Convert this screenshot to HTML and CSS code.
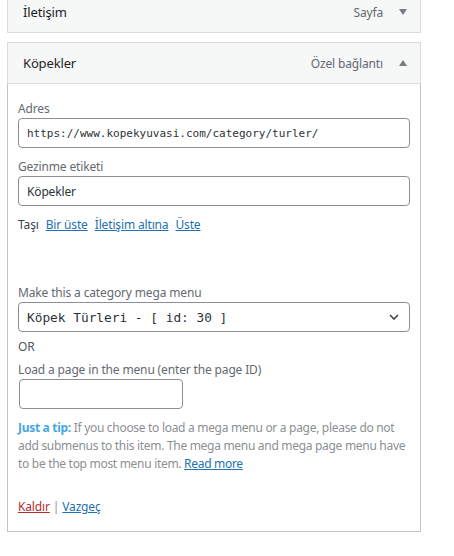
FILE: index.html
```html
<!DOCTYPE html>
<html lang="tr">
<head>
<meta charset="utf-8">
<title>Menü öğeleri</title>
<link rel="stylesheet" href="styles.css">
</head>
<body>
<ul class="menu-list">
  <li class="menu-item">
    <div class="item-handle">
      <span class="item-title">İletişim</span>
      <span class="item-type">Sayfa</span>
      <span class="item-toggle"><span class="tri tri-down"></span></span>
    </div>
  </li>
  <li class="menu-item is-open">
    <div class="item-handle">
      <span class="item-title">Köpekler</span>
      <span class="item-type">Özel bağlantı</span>
      <span class="item-toggle"><span class="tri tri-up"></span></span>
    </div>
    <div class="item-settings">
      <label class="field">
        <span class="field-label">Adres</span>
        <input class="text-input mono" type="text" value="https://www.kopekyuvasi.com/category/turler/">
      </label>
      <label class="field">
        <span class="field-label">Gezinme etiketi</span>
        <input class="text-input" type="text" value="Köpekler">
      </label>
      <div class="move-row">
        <span class="move-label">Taşı</span>
        <a href="#" class="link">Bir üste</a>
        <a href="#" class="link">İletişim altına</a>
        <a href="#" class="link">Üste</a>
      </div>

      <div class="mega-field">
        <span class="field-label">Make this a category mega menu</span>
        <div class="select-box">
          <span class="select-value">Köpek Türleri - [ id: 30 ]</span>
          <svg class="chevron" width="10" height="6" viewBox="0 0 10 6"><path d="M1 1l4 4 4-4" fill="none" stroke="#3c434a" stroke-width="1.6"/></svg>
        </div>
      </div>
      <div class="or-row">OR</div>
      <div class="page-field">
        <span class="field-label">Load a page in the menu (enter the page ID)</span>
        <input class="text-input small" type="text" value="">
      </div>
      <p class="tip"><strong class="tip-lead">Just a tip:</strong> If you choose to load a mega menu or a page, please do not add submenus to this item. The mega menu and mega page menu have to be the top most menu item. <a href="#" class="link">Read more</a></p>

      <div class="actions">
        <a href="#" class="link danger">Kaldır</a> <span class="sep">|</span> <a href="#" class="link">Vazgeç</a>
      </div>
    </div>
  </li>
</ul>
</body>
</html>
```

FILE: styles.css
```css
* { box-sizing: border-box; }

html, body {
  margin: 0;
  padding: 0;
  background: #fff;
}

body {
  font-family: "Noto Sans", "Open Sans", sans-serif;
  font-size: 12px;
  letter-spacing: -0.15px;
  color: #3c434a;
  width: 454px;
  height: 556px;
  overflow: hidden;
}

.menu-list {
  list-style: none;
  margin: -9px 0 0 7px;
  padding: 0;
  width: 414px;
}

.menu-item + .menu-item {
  margin-top: 9px;
}

.item-handle {
  display: flex;
  align-items: center;
  height: 42px;
  padding: 0 13px 0 15px;
  background: #f6f7f7;
  border: 1px solid #dcdcde;
}

.item-title {
  flex: 1;
  font-size: 13px;
  color: #1d2327;
}

.item-type {
  color: #646970;
}

.item-toggle {
  width: 24px;
  display: flex;
  justify-content: flex-end;
}

.tri {
  width: 0;
  height: 0;
  border-left: 4px solid transparent;
  border-right: 4px solid transparent;
}

.tri-down { border-top: 6px solid #787c82; }
.tri-up { border-bottom: 6px solid #787c82; }

.item-settings {
  border: 1px solid #c3c4c7;
  border-top: none;
  padding: 16px 10px 15px 10px;
}

.field {
  display: flex;
  flex-direction: column;
  margin-bottom: 10px;
}

.field-label {
  display: block;
  line-height: 18px;
  color: #646970;
}

.text-input {
  height: 30px;
  width: 100%;
  border: 1px solid #8c8f94;
  border-radius: 4px;
  padding: 0 8px;
  font-family: inherit;
  font-size: 12px;
  letter-spacing: -0.15px;
  color: #2c3338;
  background: #fff;
}

.text-input.mono {
  font-family: "DejaVu Sans Mono", monospace;
  font-size: 11px;
  letter-spacing: 0;
}

.text-input.small {
  width: 164px;
  margin-left: 1px;
}

.move-row {
  display: flex;
  gap: 7px;
  line-height: 18px;
  margin-bottom: 50px;
}

.move-label { color: #3c434a; }

.link {
  color: #2271b1;
  text-decoration: underline;
}

.link.danger { color: #b32d2e; }

.select-box {
  height: 30px;
  border: 1px solid #8c8f94;
  border-radius: 4px;
  display: flex;
  align-items: center;
  justify-content: space-between;
  padding: 0 10px 0 8px;
}

.select-value {
  font-family: "DejaVu Sans Mono", monospace;
  font-size: 12.8px;
  letter-spacing: 0;
  color: #2c3338;
}

.or-row {
  line-height: 18px;
  margin-top: 6px;
  color: #50575e;
}

.page-field {
  margin-top: 5px;
}

.tip {
  margin: 10px 0 0;
  line-height: 18px;
  color: #8c8f94;
  letter-spacing: -0.3px;
}

.tip-lead {
  color: #48a7e0;
  font-weight: 700;
}

.actions {
  margin-top: 25px;
  line-height: 18px;
}

.sep { color: #8c8f94; }
```
